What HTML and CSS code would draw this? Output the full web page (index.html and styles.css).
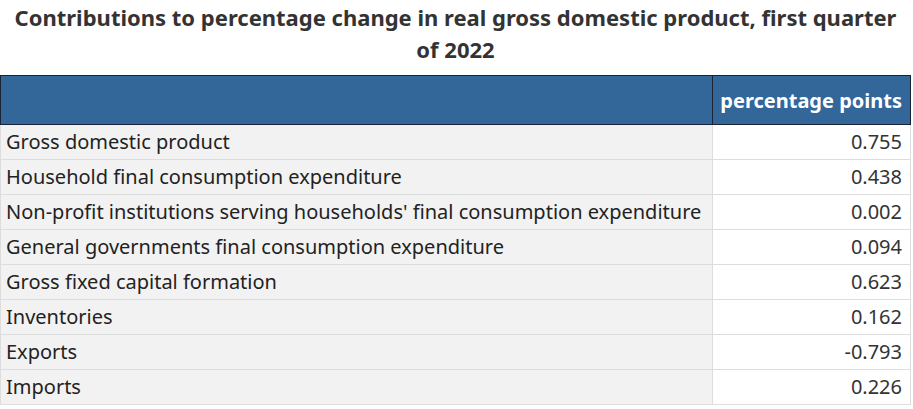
FILE: index.html
```html
<!DOCTYPE html>
<html>
<head>
<meta charset="utf-8">
<link rel="stylesheet" href="styles.css">
</head>
<body>
<div class="wrap">
<h1 class="title">Contributions to percentage change in real gross domestic product, first quarter of 2022</h1>
<table class="data">
<thead>
<tr><th class="lab"></th><th class="val">percentage points</th></tr>
</thead>
<tbody>
<tr><td class="lab">Gross domestic product</td><td class="val">0.755</td></tr>
<tr><td class="lab">Household final consumption expenditure</td><td class="val">0.438</td></tr>
<tr><td class="lab">Non-profit institutions serving households' final consumption expenditure</td><td class="val">0.002</td></tr>
<tr><td class="lab">General governments final consumption expenditure</td><td class="val">0.094</td></tr>
<tr><td class="lab">Gross fixed capital formation</td><td class="val">0.623</td></tr>
<tr><td class="lab">Inventories</td><td class="val">0.162</td></tr>
<tr><td class="lab">Exports</td><td class="val">-0.793</td></tr>
<tr><td class="lab">Imports</td><td class="val">0.226</td></tr>
</tbody>
</table>
</div>
</body>
</html>
```
FILE: styles.css
```css
html, body {
  margin: 0;
  padding: 0;
  background: #ffffff;
}
body {
  font-family: "Noto Sans", "Open Sans", "Liberation Sans", sans-serif;
  color: #222;
}
.wrap {
  width: 911px;
}
.title {
  margin: 0;
  padding: 1px 6px 10px;
  font-size: 22px;
  line-height: 32px;
  font-weight: 700;
  text-align: center;
  color: #333;
}
.data {
  width: 100%;
  border-collapse: collapse;
  font-size: 20px;
  table-layout: fixed;
}
.data th {
  background: #336699;
  color: #fff;
  font-weight: 700;
  height: 49px;
  padding: 0 8px 0 6px;
  border: 1px solid #1a2233;
  vertical-align: middle;
  line-height: 26px;
  box-sizing: border-box;
}
.data th.val {
  text-align: right;
  padding-top: 2px;
}
.data td {
  height: 35px;
  padding: 0 6px 0 5px;
  border: 1px solid #dddddd;
  vertical-align: middle;
  line-height: 26px;
  box-sizing: border-box;
}
.data td.lab {
  background: #f2f2f2;
  text-align: left;
  color: #222;
  white-space: nowrap;
}
.data th.lab {
  width: 712px;
}
.data td.val {
  background: #fff;
  text-align: right;
  color: #333;
  padding-right: 8px;
}
```
